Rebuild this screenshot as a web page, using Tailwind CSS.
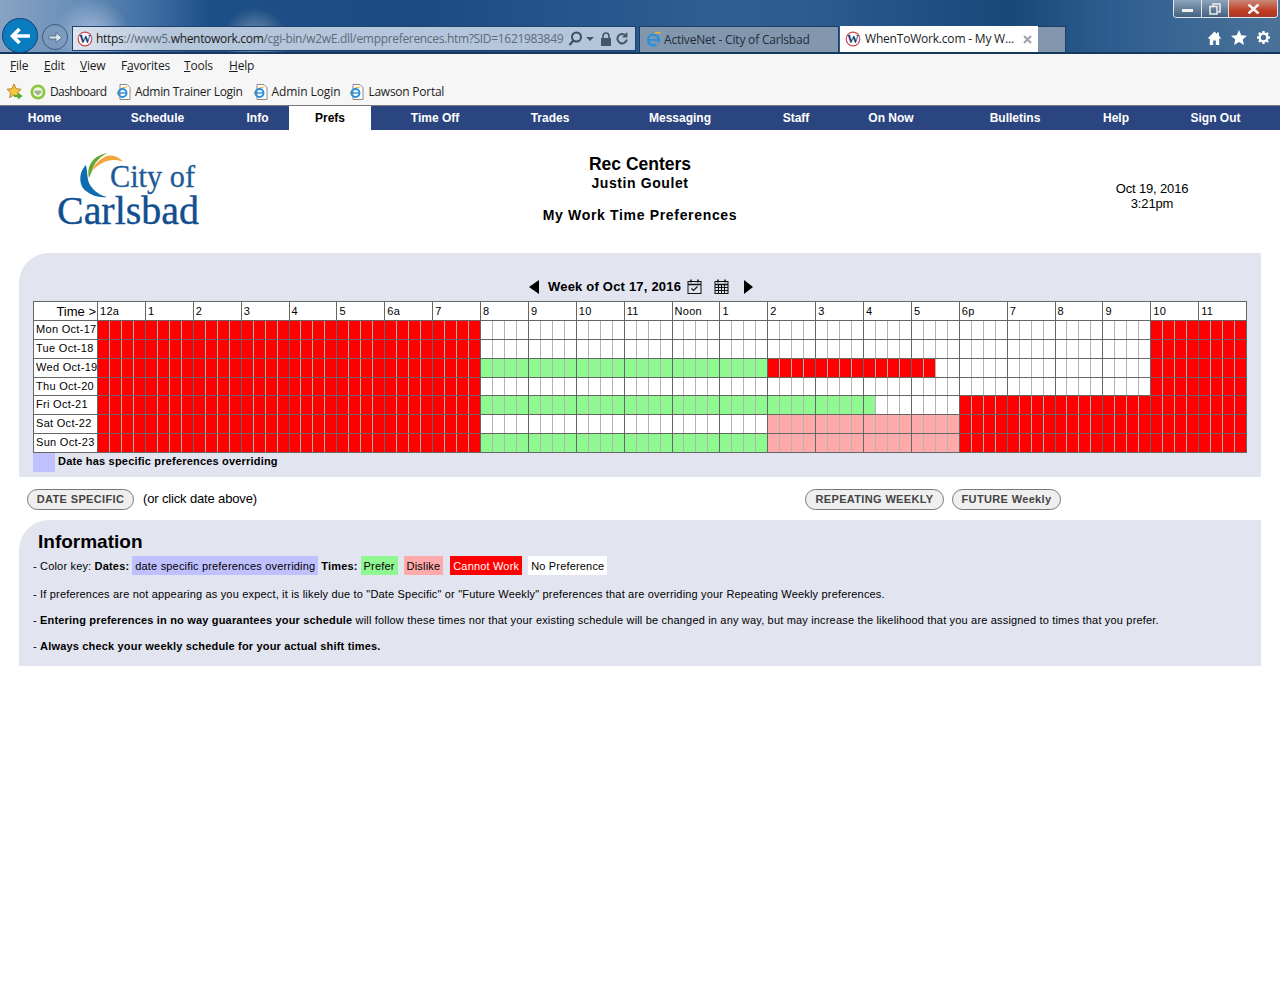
<!DOCTYPE html>
<html lang="en">
<head>
    <meta charset="UTF-8">
    <title>WhenToWork.com - My Work Time Preferences</title>
    <script src="https://cdn.jsdelivr.net/npm/@tailwindcss/browser@4"></script>
</head>
<body class="bg-white font-['Liberation_Sans',Arial,sans-serif] text-black overflow-hidden">
    <div class="w-[1280px] h-[984px] overflow-hidden">
        <!-- Browser title bar and tabs -->
        <header class="relative h-[54px] border-b-2 border-[#16375f] bg-[radial-gradient(circle_at_92px_36px,rgba(205,215,240,0.65),transparent_38px),radial-gradient(circle_at_255px_42px,rgba(200,205,215,0.6),transparent_34px),linear-gradient(to_right,#8aa3c3_0,#6f93bb_60px,#3f6fa3_150px,#1d4f87_210px,#1b4a80_420px,#2e6094_720px,#2b5b8f_820px,#184878_1010px,#2f5f90_1120px,#4a7299_1280px)]">
            <!-- Window controls -->
            <div class="absolute right-[2px] top-0 flex h-[18px] w-[105px] overflow-hidden rounded-b-[4px] border border-t-0 border-[#dfe6ef]">
                <div class="flex w-[28px] items-center justify-center border-r border-[#dfe6ef] bg-[linear-gradient(#8ea4bb,#42607f)]"><div class="mt-[3px] h-[3px] w-[11px] bg-[#f0f0f0]"></div></div>
                <div class="flex w-[27px] items-center justify-center border-r border-[#dfe6ef] bg-[linear-gradient(#8ea4bb,#42607f)]">
                    <svg width="12" height="12" viewBox="0 0 12 12" fill="none" stroke="#f0f0f0" stroke-width="1.5"><path d="M4 3V1h7v8H9"/><rect x="1" y="3.5" width="7" height="7.5"/></svg>
                </div>
                <div class="flex flex-1 items-center justify-center bg-[linear-gradient(#c98878,#c03a20_65%,#a83a28)]">
                    <svg width="13" height="10" viewBox="0 0 13 10" stroke="#f2f2f2" stroke-width="2.6"><path d="M1.5 0.5l10 9M11.5 0.5l-10 9"/></svg>
                </div>
            </div>

            <!-- Toolbar row -->
            <div class="absolute bottom-0 left-0 right-0 flex h-[32px] items-end pl-[2px]">
                <div class="mb-[-1px] flex h-[35px] w-[36px] shrink-0 items-center justify-center rounded-full border border-[#15406f] bg-[#0a7cc0]">
                    <svg width="22" height="18" viewBox="0 0 22 18" fill="none" stroke="#fff" stroke-width="3.6"><path d="M21 9H4M10.5 2L3.5 9l7 7"/></svg>
                </div>
                <div class="mb-[2px] ml-[4px] flex h-[26px] w-[26px] shrink-0 items-center justify-center rounded-full border border-[#3d5a7d] bg-[#7f9bbb]/70">
                    <svg width="15" height="13" viewBox="0 0 15 13" fill="#dfe6ee" stroke="#55708f" stroke-width="1"><path d="M1 5h7V1.5L14 6.500l-6 5V8H1z"/></svg>
                </div>

                <!-- Address bar -->
                <div class="mb-[1px] ml-[4px] flex h-[25px] w-[564px] shrink-0 items-center border border-[#20426d] bg-[linear-gradient(to_right,#dde4ee,#b6c7dc_90px,#b4c6dc)] pl-[4px] font-['Open_Sans',sans-serif] text-[12px]">
                    <svg width="16" height="16" viewBox="0 0 16 16" class="shrink-0"><circle cx="8" cy="8" r="6.800" fill="#fff" stroke="#cf4a50" stroke-width="1.200"/><text x="8" y="12" font-family="Liberation Serif" font-weight="700" font-size="12" text-anchor="middle" fill="#1d3a78">W</text></svg>
                    <div class="ml-[3px] tracking-[-0.32px] whitespace-nowrap text-[#5d6a78]"><span class="text-[#1a1a1a]">https</span>://www5.<span class="text-[#1a1a1a]">whentowork.com</span>/cgi-bin/w2wE.dll/emppreferences.htm?SID=1621983849</div>
                    <svg width="15" height="15" viewBox="0 0 15 15" fill="none" stroke="#3e4d5c" stroke-width="2" class="ml-[5px] shrink-0"><circle cx="8.500" cy="6" r="4.500"/><path d="M5.500 9.500L1.500 14"/></svg>
                    <div class="ml-[3px] h-0 w-0 shrink-0 border-x-[4px] border-t-[4px] border-x-transparent border-t-[#46566a]"></div>
                    <svg width="12" height="14" viewBox="0 0 12 14" class="ml-[6px] shrink-0"><path d="M3 6V4a3 3 0 0 1 6 0v2" fill="none" stroke="#46566a" stroke-width="1.600"/><rect x="1" y="6" width="10" height="8" fill="#46566a"/></svg>
                    <svg width="12" height="13" viewBox="0 0 12 13" fill="none" stroke="#46566a" stroke-width="2" class="ml-[4px] shrink-0"><path d="M10 4a4.700 4.700 0 1 0 .8 3.500"/><path d="M10.800 0.500v4.500H6.500" stroke-width="1.200" fill="#46566a"/></svg>
                </div>

                <!-- Tabs -->
                <div class="ml-[3px] flex h-[26px] w-[200px] shrink-0 items-center border border-b-0 border-[#1d3f66] bg-[#8296ae] pl-[5px] font-['Open_Sans',sans-serif] text-[12px] tracking-[-0.2px] text-[#1f2c3a]">
                    <svg width="17" height="17" viewBox="0 0 17 17" class="shrink-0" fill="none"><path d="M2 10.500C5 4 10 1.500 15.500 1.500" stroke="#f2b233" stroke-width="1.400"/><circle cx="8.500" cy="9" r="5.300" stroke="#2a8fdc" stroke-width="2.600"/><path d="M4 9h9" stroke="#2a8fdc" stroke-width="1.800"/><path d="M11 13l3-.5" stroke="#8296ae" stroke-width="2.500"/></svg>
                    <span class="ml-[2px]">ActiveNet - City of Carlsbad</span>
                </div>
                <div class="ml-[1px] flex h-[26px] w-[198px] shrink-0 items-center bg-white pl-[5px] font-['Open_Sans',sans-serif] text-[12px] tracking-[-0.2px] text-[#1c1c1c]">
                    <svg width="16" height="16" viewBox="0 0 16 16" class="shrink-0"><circle cx="8" cy="8" r="6.800" fill="#fff" stroke="#cf4a50" stroke-width="1.200"/><text x="8" y="12" font-family="Liberation Serif" font-weight="700" font-size="12" text-anchor="middle" fill="#1d3a78">W</text></svg>
                    <span class="ml-[4px]">WhenToWork.com - My W...</span>
                    <svg width="9" height="9" viewBox="0 0 9 9" stroke="#9aa3ad" stroke-width="2" class="ml-[9px] shrink-0"><path d="M1 1l7 7M8 1l-7 7"/></svg>
                </div>
                <div class="h-[26px] w-[28px] shrink-0 border-r border-t border-[#1d3f66] bg-[#8296ae]"></div>

                <!-- Home, favorites, tools -->
                <div class="mb-[7px] ml-auto flex items-center gap-[9px] pr-[9px]">
                    <svg width="15" height="14" viewBox="0 0 15 14" fill="#fff"><path d="M7.500 0.500L0.500 7.500h2.300V14h3.400V9.500h2.600V14h3.400V7.500h2.300L12 5V1.500h-2V3z"/></svg>
                    <svg width="16" height="15" viewBox="0 0 16 15" fill="#fff"><path d="M8 0l2.300 5.200 5.700.5-4.300 3.700 1.300 5.600L8 12l-5 3 1.300-5.600L0 5.700l5.700-.5z"/></svg>
                    <svg width="15" height="15" viewBox="0 0 15 15" fill="none" stroke="#fff"><circle cx="7.500" cy="7.500" r="3.800" stroke-width="2.200"/><path stroke-width="2.300" stroke-dasharray="2.400 1.500" d="M7.500 1v2.500M7.500 11.500V14M1 7.500h2.500M11.500 7.500H14M2.900 2.900l1.800 1.800M10.300 10.300l1.800 1.800M12.100 2.900l-1.800 1.800M4.700 10.300l-1.800 1.800"/></svg>
                </div>
            </div>
        </header>

        <!-- Menu bar -->
        <nav class="flex h-[26px] items-center bg-[#f6f6f6] pb-[2px] pl-[10px] font-['Open_Sans',sans-serif] text-[12px] tracking-[-0.2px] text-[#1c1c1c]">
            <span class="w-[34px]"><u>F</u>ile</span>
            <span class="w-[36px]"><u>E</u>dit</span>
            <span class="w-[41px]"><u>V</u>iew</span>
            <span class="w-[63px]">F<u>a</u>vorites</span>
            <span class="w-[45px]"><u>T</u>ools</span>
            <span><u>H</u>elp</span>
        </nav>

        <!-- Favorites bar -->
        <div class="flex h-[25px] items-center bg-[#f6f6f6] pb-[2px] pl-[6px] font-['Open_Sans',sans-serif] text-[12px] tracking-[-0.3px] text-[#1c1c1c]">
            <svg width="17" height="17" viewBox="0 0 17 17" class="shrink-0"><path d="M8 1l2.100 4.700 5 .6-3.700 3.300 1 5L8 11.800 3.600 14.600l1-5L1 6.300l5-.6z" fill="#f5c842" stroke="#b8862a"/><path d="M8 12h4V9.500l4.500 3.500-4.500 3.500V14H8z" fill="#4caf2f"/></svg>
            <svg width="16" height="16" viewBox="0 0 16 16" class="ml-[7px] shrink-0"><circle cx="8" cy="8" r="7.500" fill="#8cc63f"/><circle cx="8" cy="8" r="4.800" fill="#f4f4e8"/><path d="M4.500 6.500h7v2l-3.500 3-3.500-3z" fill="#9db88a"/></svg>
            <span class="ml-[4px] w-[60px] tracking-[-0.6px]">Dashboard</span>
            <svg width="15" height="16" viewBox="0 0 15 16" class="ml-[6px] shrink-0" fill="none"><path d="M4 0.500h7l3 3v12H4z" fill="#fff" stroke="#8a8a8a"/><path d="M1 10C3 5 7 3 11 3" stroke="#f2b233" stroke-width="1.200"/><circle cx="6.500" cy="9" r="4" stroke="#2a8fdc" stroke-width="2"/><path d="M3 9h7" stroke="#2a8fdc" stroke-width="1.400"/></svg>
            <span class="ml-[4px]">Admin Trainer Login</span>
            <svg width="15" height="16" viewBox="0 0 15 16" class="ml-[10px] shrink-0" fill="none"><path d="M4 0.500h7l3 3v12H4z" fill="#fff" stroke="#8a8a8a"/><path d="M1 10C3 5 7 3 11 3" stroke="#f2b233" stroke-width="1.200"/><circle cx="6.500" cy="9" r="4" stroke="#2a8fdc" stroke-width="2"/><path d="M3 9h7" stroke="#2a8fdc" stroke-width="1.400"/></svg>
            <span class="ml-[4px] tracking-[-0.1px]">Admin Login</span>
            <svg width="15" height="16" viewBox="0 0 15 16" class="ml-[9px] shrink-0" fill="none"><path d="M4 0.500h7l3 3v12H4z" fill="#fff" stroke="#8a8a8a"/><path d="M1 10C3 5 7 3 11 3" stroke="#f2b233" stroke-width="1.200"/><circle cx="6.500" cy="9" r="4" stroke="#2a8fdc" stroke-width="2"/><path d="M3 9h7" stroke="#2a8fdc" stroke-width="1.400"/></svg>
            <span class="ml-[4px] tracking-[-0.25px]">Lawson Portal</span>
        </div>

        <!-- Site navigation -->
        <nav class="flex h-[25px] border-t border-[#777] bg-[#2b4580] text-center text-[12px] font-bold leading-[24px] text-white">
            <a class="w-[89px]">Home</a>
            <a class="w-[137px]">Schedule</a>
            <a class="w-[63px]">Info</a>
            <a class="w-[82px] bg-white text-black">Prefs</a>
            <a class="w-[128px]">Time Off</a>
            <a class="w-[102px]">Trades</a>
            <a class="w-[158px]">Messaging</a>
            <a class="w-[74px]">Staff</a>
            <a class="w-[116px]">On Now</a>
            <a class="w-[132px]">Bulletins</a>
            <a class="w-[70px]">Help</a>
            <a class="w-[129px]">Sign Out</a>
        </nav>

        <!-- Page title -->
        <section class="flex h-[123px] pt-[23px]">
            <div class="w-[320px] pl-[56px]">
                <svg width="150" height="80" viewBox="0 0 150 80">
                    <path d="M30 12C22 20 23 33 30 38C36 43 44 45 51 44C42 42 34 35 32 27C31 21 31 16 30 12z" fill="#0e6cb0"/>
                    <path d="M33 25C30 12 38 2 52 0C44 3 38 10 36 18z" fill="#65a832"/>
                    <path d="M35 19C39 9 50 0 58 3C62 4 65 6 67 9C56 4 44 9 35 19z" fill="#f3a63c"/>
                    <text x="54" y="34" font-family="Liberation Serif" font-size="31" fill="#1b5a97" stroke="#1b5a97" stroke-width="0.3" textLength="85" lengthAdjust="spacingAndGlyphs">City of</text>
                    <text x="1" y="71" font-family="Liberation Serif" font-size="41" fill="#124f8f" stroke="#124f8f" stroke-width="0.4" textLength="142" lengthAdjust="spacingAndGlyphs">Carlsbad</text>
                </svg>
            </div>
            <div class="w-[640px] pt-[1px] text-center font-bold">
                <div class="text-[17.5px] leading-[20px]">Rec Centers</div>
                <div class="text-[14px] leading-[18px] tracking-[0.6px]">Justin Goulet</div>
                <div class="mt-[14px] text-[14px] leading-[18px] tracking-[0.67px]">My Work Time Preferences</div>
            </div>
            <div class="w-[320px] pl-[128px] pr-[64px] pt-[28px] text-center text-[13px] leading-[15px] tracking-[-0.15px] whitespace-nowrap">
                <div>Oct 19, 2016</div>
                <div>3:21pm</div>
            </div>
        </section>

        <!-- Preferences grid -->
        <section class="mx-[19px] h-[224px] rounded-tl-[30px] bg-[#e2e5f0] pt-[23px] pl-[14px]">
            <div class="flex h-[25px] items-center pb-[4px] pl-[496px]">
                <div class="h-0 w-0 border-y-[7px] border-r-[10px] border-y-transparent border-r-black"></div>
                <span class="ml-[9px] text-[13px] font-bold tracking-[0.2px] whitespace-nowrap">Week of Oct 17, 2016</span>
                <svg width="15" height="15" viewBox="0 0 15 15" fill="none" stroke="#111" class="ml-[6px] shrink-0"><rect x="1" y="2.500" width="13" height="12"/><path d="M1 5.500h13M4 0.500v3M11 0.500v3" stroke-width="1.500"/><path d="M4.500 9.500l2 2 4-4" stroke-width="1.200"/></svg>
                <svg width="15" height="15" viewBox="0 0 15 15" fill="none" stroke="#111" class="ml-[12px] shrink-0"><rect x="1" y="2.500" width="13" height="12"/><path d="M1 5.500h13M4 0.500v3M11 0.500v3" stroke-width="1.500"/><path d="M1 8.500h13M1 11.500h13M4.500 5.500v9M7.500 5.500v9M10.500 5.500v9"/></svg>
                <div class="ml-[15px] h-0 w-0 border-y-[7px] border-l-[9px] border-y-transparent border-l-black"></div>
            </div>

            <div id="grid" class="w-[1214px] border-x border-t border-[#666] text-[11px] tracking-[0.3px]"></div>

            <div class="flex h-[19px] items-center text-[11px] font-bold tracking-[0.19px]">
                <div class="h-[19px] w-[22px] bg-[#c0c0ff]"></div>
                <span class="ml-[3px] mb-[2px]">Date has specific preferences overriding</span>
            </div>
        </section>

        <!-- Buttons -->
        <section class="flex h-[43px] items-center pt-[1px] pl-[27px] text-[11px] font-bold tracking-[0.35px] text-[#444]">
            <button class="h-[21px] w-[107px] rounded-full border border-[#777] bg-[#efefef]">DATE SPECIFIC</button>
            <span class="ml-[9px] w-[114px] text-[13px] font-normal tracking-[-0.15px] whitespace-nowrap text-black">(or click date above)</span>
            <button class="ml-[548px] h-[21px] w-[139px] rounded-full border border-[#777] bg-[#efefef]">REPEATING WEEKLY</button>
            <button class="ml-[8px] h-[21px] w-[109px] rounded-full border border-[#777] bg-[#efefef]">FUTURE Weekly</button>
        </section>

        <!-- Information -->
        <section class="mx-[19px] h-[146px] rounded-tl-[30px] bg-[#e2e5f0] pl-[14px] pt-[10px] text-[11px] tracking-[0.176px]">
            <h2 class="pl-[5px] text-[19px] leading-[23px] font-bold tracking-normal">Information</h2>
            <div class="mt-[3px] flex h-[19px] whitespace-nowrap leading-[19px]">
                <span class="h-[19px] pt-[1px]">- Color key: <b>Dates:</b></span>
                <span class="ml-[3px] h-[19px] bg-[#c0c0ff] px-[3px] pt-[1px]">date specific preferences overriding</span>
                <b class="ml-[3px] h-[19px] pt-[1px]">Times:</b>
                <span class="ml-[3px] h-[19px] bg-[#90f890] px-[3px] pt-[1px]">Prefer</span>
                <span class="ml-[6px] h-[19px] bg-[#ffaaaa] px-[3px] pt-[1px]">Dislike</span>
                <span class="ml-[7px] h-[19px] bg-[#ff0000] px-[3px] pt-[1px] text-white">Cannot Work</span>
                <span class="ml-[6px] h-[19px] bg-white px-[3px] pt-[1px]">No Preference</span>
            </div>
            <p class="mt-[11px] leading-[16px]">- If preferences are not appearing as you expect, it is likely due to "Date Specific" or "Future Weekly" preferences that are overriding your Repeating Weekly preferences.</p>
            <p class="mt-[10px] leading-[16px]">- <b>Entering preferences in no way guarantees your schedule</b> will follow these times nor that your existing schedule will be changed in any way, but may increase the likelihood that you are assigned to times that you prefer.</p>
            <p class="mt-[10px] leading-[16px]">- <b>Always check your weekly schedule for your actual shift times.</b></p>
        </section>
    </div>

    <script>
        // Hour labels across the top of the grid
        const hours = ['12a','1','2','3','4','5','6a','7','8','9','10','11','Noon','1','2','3','4','5','6p','7','8','9','10','11'];

        // Each day: runs of [end quarter, colour]
        const days = [
            { label: 'Mon Oct-17', h: 'h-[19px]', runs: [[32,'r'],[88,'w'],[96,'r']] },
            { label: 'Tue Oct-18', h: 'h-[19px]', runs: [[32,'r'],[88,'w'],[96,'r']] },
            { label: 'Wed Oct-19', h: 'h-[19px]', runs: [[32,'r'],[56,'g'],[70,'r'],[88,'w'],[96,'r']] },
            { label: 'Thu Oct-20', h: 'h-[18px]', runs: [[32,'r'],[88,'w'],[96,'r']] },
            { label: 'Fri Oct-21', h: 'h-[19px]', runs: [[32,'r'],[65,'g'],[72,'w'],[96,'r']] },
            { label: 'Sat Oct-22', h: 'h-[19px]', runs: [[32,'r'],[56,'w'],[72,'p'],[96,'r']] },
            { label: 'Sun Oct-23', h: 'h-[19px]', runs: [[32,'r'],[56,'g'],[72,'p'],[96,'r']] }
        ];

        const colours = { r: 'bg-[#ff0000]', g: 'bg-[#90f890]', p: 'bg-[#ffaaaa]', w: 'bg-white' };

        let html = '<div class="flex h-[19px] border-b border-[#666] bg-white">' +
            '<div class="w-[63px] shrink-0 pr-[1px] text-right text-[13px] leading-[19px] tracking-normal">Time &gt;</div>' +
            '<div class="grid flex-1 grid-cols-24">';
        hours.forEach(h => {
            html += `<div class="border-l border-[#666] pl-[2px] leading-[18px]">${h}</div>`;
        });
        html += '</div></div>';

        days.forEach(day => {
            let cells = '';
            let q = 0;
            day.runs.forEach(([end, c]) => {
                for (; q < end; q++) {
                    const line = q % 4 === 0 ? 'border-[#666]' : 'border-[#b4b4b4]';
                    cells += `<div class="border-l ${line} ${colours[c]}"></div>`;
                }
            });
            html += `<div class="flex ${day.h} border-b border-[#666]">` +
                `<div class="w-[63px] shrink-0 overflow-hidden bg-white pl-[2px] leading-[16px] whitespace-nowrap">${day.label}</div>` +
                `<div class="grid flex-1 grid-cols-[repeat(96,minmax(0,1fr))]">${cells}</div></div>`;
        });
        document.getElementById('grid').innerHTML = html;
    </script>
</body>
</html>
